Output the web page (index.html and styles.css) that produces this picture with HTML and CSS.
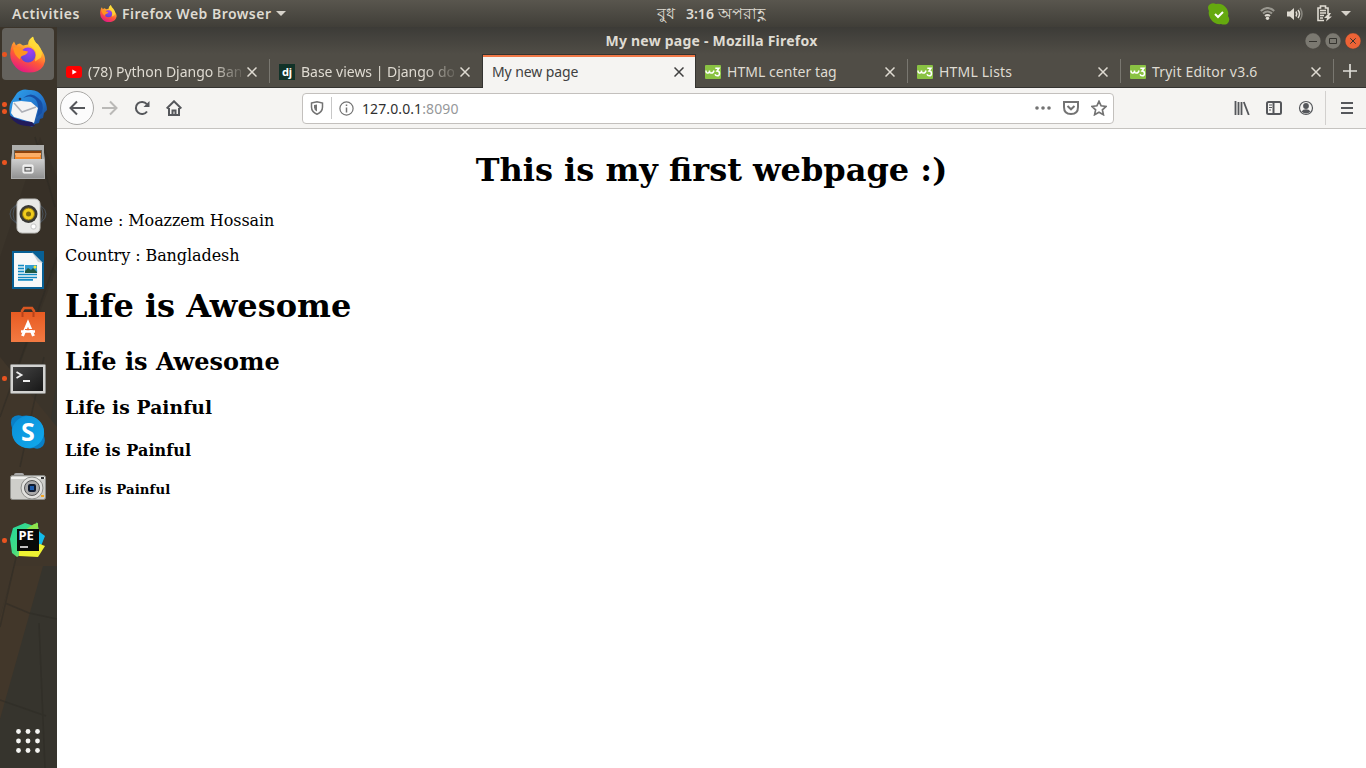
FILE: index.html
```html
<!DOCTYPE html>
<html lang="en">
<head>
<meta charset="utf-8">
<title>My new page - Mozilla Firefox</title>
<link rel="stylesheet" href="styles.css">
</head>
<body>
<svg class="defs" width="0" height="0" aria-hidden="true">
  <defs>
    <linearGradient id="fire" x1=".8" y1="0" x2=".35" y2="1"><stop offset="0" stop-color="#fff44f"/><stop offset=".35" stop-color="#ffb02e"/><stop offset=".62" stop-color="#ff5a36"/><stop offset="1" stop-color="#e31587"/></linearGradient>
    <radialGradient id="globe" cx=".6" cy=".2" r=".9"><stop offset="0" stop-color="#a83cf5"/><stop offset="1" stop-color="#5348d0"/></radialGradient>
    <linearGradient id="bird" x1="0" y1="0" x2="1" y2="1"><stop offset="0" stop-color="#2fa4ee"/><stop offset=".6" stop-color="#2273cb"/><stop offset="1" stop-color="#173779"/></linearGradient>
    <linearGradient id="metal" x1="0" y1="0" x2="0" y2="1"><stop offset="0" stop-color="#cfcfcf"/><stop offset="1" stop-color="#929292"/></linearGradient>
    <linearGradient id="bag" x1="0" y1="0" x2="0" y2="1"><stop offset="0" stop-color="#e85b22"/><stop offset="1" stop-color="#f27a42"/></linearGradient>
    <linearGradient id="term" x1="0" y1="0" x2="1" y2="1"><stop offset="0" stop-color="#454545"/><stop offset="1" stop-color="#171717"/></linearGradient>
    <linearGradient id="sky" x1="0" y1="0" x2="1" y2="1"><stop offset="0" stop-color="#0a8fd8"/><stop offset="1" stop-color="#11a9ed"/></linearGradient>
    <linearGradient id="pyg" x1="0" y1="0" x2="1" y2="1"><stop offset="0" stop-color="#20d6a0"/><stop offset=".5" stop-color="#43db82"/><stop offset="1" stop-color="#f5f32e"/></linearGradient>
  </defs>
  <symbol id="firefox" viewBox="0 0 36 36">
    <path d="M2 8 4 5l2 4q2-2 4-2l3 2 5-1Q18 3 23 0q1 5 5 8l3 5q5 7 4 12-2 9-12 11-10 2-17-5Q-3 22 2 8" fill="url(#fire)"/>
    <path d="M23 0q-5 5-4 9 5 2 7 7l-1 9 6-4q3-6-3-13-4-3-5-8" fill="#ffe038" opacity=".7"/>
    <circle cx="18" cy="18.500" r="7.500" fill="url(#globe)"/>
    <path d="M3 11q7-2 10 3l5 1q-1 3-5 4-3 1-3 4-5-4-6-8z" fill="#ff9420"/>
  </symbol>
  <symbol id="w3" viewBox="0 0 16 14"><rect width="16" height="14" rx="1" fill="#8ac243"/><path d="M1 5.500q0 3 2 2.500 1.500 0 1.500-2.500 0 3 2 2.500 2 0 2.500-2.500M10.300 3.300h3.700l-2 2.700q2.500 0 2.500 2.400 0 2.400-2.300 2.400-1.700 0-2.200-1.500" fill="none" stroke="#fff" stroke-width="1.500"/></symbol>
  <symbol id="close" viewBox="0 0 10 10"><path d="m.5.5 9 9m0-9-9 9" fill="none" stroke="currentColor" stroke-width="1.500"/></symbol>
</svg>

<header class="topbar">
  <span class="activities">Activities</span>
  <span class="appmenu"><svg width="17" height="17"><use href="#firefox"/></svg><span>Firefox Web Browser</span><i class="caret"></i></span>
  <span class="clock"><span class="bn day">বুধ</span><span class="time">3:16</span><span class="bn">অপরাহ্ণ</span></span>
  <span class="tray">
    <svg class="status" width="22" height="22" viewBox="0 0 22 22"><path d="M1 2Q4-1 8 1q7-1 11 5 2 4 1 7 3 4-1 8-3 1-6 0-7 1-11-6Q0 11 1 8-1 4 1 2" fill="#65a90f"/><path d="m7 11 3 3 5-5" fill="none" stroke="#fff" stroke-width="2"/></svg>
    <svg class="wifi" width="15" height="13" viewBox="0 0 15 13" fill="none" stroke-width="2"><path d="M.8 4q6.700-6 13.400 0M3 6.500q4.500-4 9 0" stroke="#99978f"/><path d="M5 9q2.500-2 5 0" stroke="#dfdbd2"/><circle cx="7.500" cy="11.200" r="1.700" fill="#dfdbd2"/></svg>
    <svg class="volume" width="16" height="14" viewBox="0 0 16 14"><path d="M0 4.500h3L7 1v12L3 9.500H0z" fill="#dfdbd2"/><path d="M9 4.500q1.500 2.500 0 5M11 3q3 4 0 8" fill="none" stroke="#dfdbd2" stroke-width="1.500"/><path d="M13 1q4 6 0 12" fill="none" stroke="#88867e" stroke-width="1.500"/></svg>
    <svg class="battery" width="15" height="17" viewBox="0 0 15 17"><path d="M11 9V3H8.500V1h-5v2H1v12.500h6" fill="none" stroke="#dfdbd2" stroke-width="1.600"/><path d="M3 5.500h6M3 8h6M3 10.500h4M3 13h3" stroke="#dfdbd2" stroke-width="1.400"/><path d="m12 8-5 5h3l-1 3.500 6-5h-3l2-3.500z" fill="#dfdbd2"/></svg>
    <i class="caret"></i>
  </span>
</header>

<div class="desktop">
  <nav class="dock">
    <svg class="wallpaper" width="57" height="741" viewBox="0 0 57 741" preserveAspectRatio="none"><rect width="57" height="741" fill="#36342d"/><path d="M0 0h57v350L30 540H0z" fill="#3b342a"/><path d="M0 230 40 110l17 40v90L0 390z" fill="#373027"/><path d="M14 539h29L0 692V590z" fill="#42372a"/><path d="M0 330 57 400v139H14L0 590z" fill="#40362a"/><path d="m20 440 24-110M0 390l57-160M35 110l20 70M0 600l18-78M5 576l24 10 28 6M39 596l6 145M0 673l46 16" fill="none" stroke="#2b2923" stroke-width="1.500" opacity=".5"/></svg>
    <a class="app active"><i class="dot"></i><svg width="36" height="37" viewBox="0 0 36 36"><use href="#firefox"/></svg></a>
    <a class="app"><i class="dot two"></i><svg width="38" height="38" viewBox="0 0 38 38"><path d="M8 4q5-5 12-3 9-1 14 7 4 7 4 13l-3 3-1 5-3 1-1 4-4 1-3 3L2 29q-4-12 2-19z" fill="url(#bird)"/><path d="M14 9q8-4 13 2 4 6 1 17l5-4q3-10-4-15Q22 2 14 9" fill="#164fa5"/><path d="m4 13 8-1 10 1 7 6-4 15-20-6-3-4z" fill="#f4f4f4"/><path d="m5 14 8 9 14-5" fill="none" stroke="#aeb0b7" stroke-width="1.500"/><path d="M0 26q10 6 23 7l3 4Q7 39 0 26" fill="#211b5b"/><circle cx="11" cy="10" r="1.300" fill="#2b2b45"/></svg></a>
    <a class="app"><i class="dot"></i><svg width="34" height="36" viewBox="0 0 34 36"><path d="M2 1h30l2 15v19H0V16z" fill="#aaa"/><path d="M1 1h32v15H1z" fill="#aeaeac"/><path d="M3 6h28v10H3z" fill="#666158"/><path d="M4 7h26v2H4z" fill="#8d420c"/><path d="M4 9h26v6H4z" fill="#f68a2c"/><path d="M4 10h26M5 12h24" stroke="#ffd2a5"/><path d="M1 15h32v19H1z" fill="url(#metal)"/><rect x="12" y="21" width="10" height="8" rx="1" fill="#ddd" stroke="#fff"/><rect x="14" y="23.500" width="6" height="3.500" fill="#ddd" stroke="#555"/></svg></a>
    <a class="app"><svg width="38" height="36" viewBox="0 0 38 36"><g fill="none" stroke="#5d7692" opacity=".5"><ellipse cx="19" cy="16" rx="18" ry="12"/><ellipse cx="19" cy="16" rx="15" ry="14"/></g><rect x="8" y="1" width="23" height="34" rx="5" fill="#e9e9e7" stroke="#bfbfbd"/><circle cx="19.500" cy="16" r="9" fill="#3a3935"/><circle cx="19.500" cy="16" r="6" fill="#f1cc1c" stroke="#8c7412"/><circle cx="19.500" cy="16" r="2.500" fill="#7d6910"/><rect x="22" y="26" width="5" height="5" rx="2" fill="#fff" stroke="#c6c6c6"/></svg></a>
    <a class="app"><svg width="32" height="38" viewBox="0 0 32 38"><path d="M1 1h20l10 10v26H1z" fill="#f8f8f8" stroke="#086095" stroke-width="2"/><path d="M20 0h12v12z" fill="#086095"/><path d="m20 1 11 11-5-1z" fill="#cbd1d5"/><path d="M6 14h6v5h14v3H6z" fill="#d7ecf6"/><path d="M6 14.500h6M6 17.500h6M6 20.500h6M6 23.500h19M6 26.500h19M6 28.800h15" stroke="#138ac3" stroke-width="1.700"/><path d="M13 14h12v8H13z" fill="#329cd0"/><path d="m13 20 3-3 3 2 2-2 4 4v1H13z" fill="#205944"/><circle cx="23" cy="16" r="1.500" fill="#f5e52d"/></svg></a>
    <a class="app"><svg width="34" height="37" viewBox="0 0 34 37"><path d="M11 12V5l2-3h8l2 3v7" fill="none" stroke="#d95722" stroke-width="2.500"/><path d="M0 6h34v30H0z" fill="url(#bag)"/><path d="M11.500 11V6M22.500 11V6" stroke="#b8431a" stroke-width="2"/><path d="m11.500 30 5.500-13 5.500 13" fill="none" stroke="#fff" stroke-width="3"/><path d="M10 25.500h14" stroke="#fff" stroke-width="2.500"/><path d="M14 23.500h9" stroke="#ed6932"/></svg></a>
    <a class="app"><i class="dot"></i><svg class="terminal" width="36" height="30" viewBox="0 0 36 30"><rect x=".5" y=".5" width="35" height="29" rx="1" fill="#d3d3d1" stroke="#8b8b88"/><rect x="3" y="3" width="30" height="24" fill="url(#term)"/><path d="m6.500 8 5 3-5 3M13 17h7" fill="none" stroke="#eee" stroke-width="1.800"/></svg></a>
    <a class="app"><svg class="skype" width="34" height="34" viewBox="0 0 34 34"><path d="M1 3Q5-1 11 1q11-2 18 6 5 6 4 14 2 6-1 10-4 4-9 2-11 2-18-6-5-7-4-14Q-1 7 1 3" fill="#0a7fc6"/><circle cx="17" cy="17" r="16" fill="url(#sky)"/><text x="17" y="26" text-anchor="middle">S</text></svg></a>
    <a class="app"><svg width="36" height="27" viewBox="0 0 36 27"><rect x="4" y="0" width="10" height="6" rx="2" fill="#aaa"/><rect x=".5" y="2.500" width="35" height="24" rx="2" fill="#cececa" stroke="#8d8d89"/><path d="M1 5h34" stroke="#f0f0ed" stroke-width="2"/><circle cx="22" cy="15" r="11" fill="#e2e2df" stroke="#8f908c"/><circle cx="22" cy="15" r="7.500" fill="#aaa" stroke="#555"/><rect x="18" y="11" width="8" height="8" rx="2" fill="#101b2f"/><rect x="20" y="13" width="4" height="4" fill="#1d5cac"/><path d="M31 4h3v2h-3z" fill="#333"/><path d="M31 22h3v2h-3z" fill="#f4a623"/></svg></a>
    <a class="app"><i class="dot"></i><svg class="pycharm" width="36" height="36" viewBox="0 0 36 36"><path d="m3 6 12-5 9 3 3-4 3 12-10 15-13 8-5-4-2-14z" fill="url(#pyg)"/><path d="M27 8l8 6-4 10-6-3z" fill="#12bceb"/><path d="m30 22 5 2-7 11-19-1V29z" fill="#eff332"/><path d="M24 2 15 8h13V1z" fill="#8de44d"/><rect x="7" y="7" width="22" height="22" fill="#080a09"/><text x="8.500" y="18">PE</text><path d="M10 25h8" stroke="#fff" stroke-width="1.500"/></svg></a>
    <a class="all-apps"><svg width="24" height="24" viewBox="0 0 24 24" fill="#f5f5f2"><circle cx="2.500" cy="2.500" r="2.400"/><circle cx="12" cy="2.500" r="2.400"/><circle cx="21.500" cy="2.500" r="2.400"/><circle cx="2.500" cy="12" r="2.400"/><circle cx="12" cy="12" r="2.400"/><circle cx="21.500" cy="12" r="2.400"/><circle cx="2.500" cy="21.500" r="2.400"/><circle cx="12" cy="21.500" r="2.400"/><circle cx="21.500" cy="21.500" r="2.400"/></svg></a>
  </nav>

  <section class="window">
    <div class="titlebar"><strong>My new page - Mozilla Firefox</strong>
      <span class="controls"><svg width="16" height="16" viewBox="0 0 16 16"><circle cx="8" cy="8" r="7.900"/><path d="M4 8.500h8"/></svg><svg width="16" height="16" viewBox="0 0 16 16"><circle cx="8" cy="8" r="7.900"/><path d="M4.500 5.500h7v5h-7z"/></svg><svg class="quit" width="16" height="16" viewBox="0 0 16 16"><circle cx="8" cy="8" r="7.900"/><path d="m5.300 5.300 5.400 5.400m0-5.400-5.400 5.400"/></svg></span>
    </div>
    <div class="tabs">
      <div class="tab"><svg class="fav" width="16" height="12" viewBox="0 0 16 12"><rect width="16" height="12" rx="3" fill="#f00"/><path d="m6.300 3.500 4.500 2.500-4.500 2.500z" fill="#fff"/></svg><span class="label fade">(78) Python Django Ban</span><svg class="x"><use href="#close"/></svg></div>
      <div class="tab last"><svg class="fav dj" width="16" height="16" viewBox="0 0 16 16"><rect width="16" height="16" fill="#113228"/><text x="8" y="12" text-anchor="middle">dj</text></svg><span class="label fade">Base views | Django do</span><svg class="x"><use href="#close"/></svg></div>
      <div class="tab selected"><span class="label">My new page</span><svg class="x"><use href="#close"/></svg></div>
      <div class="tab after"><svg class="fav" width="16" height="14"><use href="#w3"/></svg><span class="label">HTML center tag</span><svg class="x"><use href="#close"/></svg></div>
      <div class="tab"><svg class="fav" width="16" height="14"><use href="#w3"/></svg><span class="label wide">HTML Lists</span><svg class="x"><use href="#close"/></svg></div>
      <div class="tab"><svg class="fav" width="16" height="14"><use href="#w3"/></svg><span class="label wide">Tryit Editor v3.6</span><svg class="x"><use href="#close"/></svg></div>
      <div class="new-tab"><svg width="14" height="14" viewBox="0 0 14 14"><path d="M7 0v14M0 7h14" stroke="#deddd8" stroke-width="1.700"/></svg></div>
    </div>
    <div class="toolbar">
      <span class="back"><svg width="16" height="16" viewBox="0 0 16 16"><path d="M16 8H1.500M8 1.500 1.500 8 8 14.500"/></svg></span>
      <span class="tool forward"><svg width="16" height="16" viewBox="0 0 16 16"><path d="M0 8h14.500M8 1.500 14.500 8 8 14.500"/></svg></span>
      <span class="tool"><svg width="16" height="16" viewBox="0 0 16 16"><path d="M13 11.500A6.100 6.100 0 1 1 12.800 4.200"/><path d="M15.500 1v6H9.500z" fill="#55575b" stroke="none"/></svg></span>
      <span class="tool"><svg width="16" height="16" viewBox="0 0 16 16"><path d="m.7 8.500 7.300-7.200 7.300 7.200M3 8v7h10V8"/><path d="M6.500 15v-4.500h3V15"/></svg></span>
      <div class="urlbar">
        <svg class="shield" width="14" height="14" viewBox="0 0 14 14"><path d="M1.500 2 7 .8 12.500 2v4q0 5-5.500 7.200Q1.500 11 1.500 6z"/><path d="M7 3.500 4 4v2.500q0 2.500 3 4z" fill="#737373" stroke="none"/></svg>
        <i class="split"></i>
        <svg class="info" width="15" height="15" viewBox="0 0 15 15"><circle cx="7.500" cy="7.500" r="6.600" stroke-width="1.200"/><path d="M7.500 6.500v5M7.500 3.500v1.600"/></svg>
        <span class="url">127.0.0.1<em>:8090</em></span>
        <svg class="dots" width="16" height="4" viewBox="0 0 16 4"><circle cx="2" cy="2" r="1.800"/><circle cx="8" cy="2" r="1.800"/><circle cx="14" cy="2" r="1.800"/></svg>
        <svg width="16" height="14" viewBox="0 0 16 14"><path d="M1 1h14v5q0 7-7 7t-7-7z"/><path d="M4.500 5 8 8.300 11.500 5"/></svg>
        <svg width="16" height="16" viewBox="0 0 16 16"><path d="m8 1.300 2.100 4.500 5 .6-3.700 3.400 1 4.900L8 12.200l-4.400 2.500 1-4.900L.9 6.400l5-.6z" stroke-width="1.700"/></svg>
      </div>
      <div class="right-tools">
        <svg width="16" height="14" viewBox="0 0 16 14"><path d="M1.500 0v14M4.500 1v13M7.500 1v13M9.800 1l5 13" stroke-width="1.800"/></svg>
        <svg width="16" height="14" viewBox="0 0 16 14"><rect x="1" y="1" width="14" height="12" rx="1.500"/><path d="M7.500 1v12"/><path d="M3 4h3M3 6.500h3M3 9h2" stroke-width="1"/></svg>
        <svg width="16" height="16" viewBox="0 0 16 16"><circle cx="8" cy="8" r="6.500" stroke-width="1.200"/><circle cx="8" cy="6" r="2.900" fill="#55575b" stroke="none"/><path d="M3.500 11.500Q5 9.300 8 9.300t4.500 2.200Q10.500 13.500 8 13.500t-4.500-2z" fill="#55575b" stroke="none"/></svg>
        <i class="divider"></i>
        <svg class="menu" width="12" height="12" viewBox="0 0 12 12"><path d="M0 1h12M0 6h12M0 11h12"/></svg>
      </div>
    </div>
    <main class="page">
      <h1 class="title">This is my first webpage :)</h1>
      <p>Name : Moazzem Hossain</p>
      <p>Country : Bangladesh</p>
      <h1>Life is Awesome</h1>
      <h2>Life is Awesome</h2>
      <h3>Life is Painful</h3>
      <h4>Life is Painful</h4>
      <h5>Life is Painful</h5>
    </main>
  </section>
</div>
</body>
</html>
```
FILE: styles.css
```css
* { box-sizing: border-box; }
body { margin: 0; width: 1366px; height: 768px; overflow: hidden; background: #fff; font: 14px/20px "Noto Sans", sans-serif; display: flex; flex-direction: column; }
svg { flex: none; display: block; }
.defs { position: absolute; }
.topbar { height: 27px; flex: none; display: grid; grid-template-columns: 100px 557px 1fr auto; align-items: center; padding-right: 15px; background: linear-gradient(#59564e, #403e38); color: #dfdbd2; font-weight: 600; font-size: 14px; }
.activities { padding-left: 12px; letter-spacing: .55px; }
.appmenu { display: flex; align-items: center; gap: 5px; letter-spacing: .48px; }
.caret { border: 5px solid transparent; border-top-color: #d6d2ca; border-bottom: 0; width: 0; flex: none; }
.clock { display: flex; align-items: center; white-space: nowrap; }
.time { margin-right: 4px; }
.day { width: 29px; }
.bn { font-weight: 500; font-size: 15.500px; margin-top: -2px; }
.tray { display: flex; align-items: center; }
.wifi { margin-left: 30px; }
.volume { margin-left: 12px; }
.battery { margin-left: 14px; }
.tray .caret { margin-left: 9px; }
.desktop { display: flex; flex: 1; min-height: 0; }
.dock { width: 57px; flex: none; position: relative; display: flex; flex-direction: column; }
.wallpaper { position: absolute; inset: 0; z-index: -1; }
.app { height: 54px; position: relative; display: flex; align-items: center; justify-content: center; padding-right: 1px; flex: none; }
.app.active::before { content: ""; position: absolute; z-index: -1; left: 2px; top: 1px; width: 52px; height: 52px; border-radius: 4px; background: #64625d; }
.dot { position: absolute; left: 2px; top: 25px; width: 4.500px; height: 4.500px; border-radius: 50%; background: #e95420; }
.dot.two { top: 21px; box-shadow: 0 7px #e95420; }
.terminal { margin-top: 2px; }
.skype text { font: 700 25px "Open Sans", sans-serif; fill: #fff; }
.pycharm text { font: 700 13px "Noto Sans", sans-serif; fill: #fff; }
.all-apps { margin: auto 0 15px 16px; }
.window { flex: 1; min-width: 0; display: flex; flex-direction: column; }
.titlebar { height: 27px; flex: none; display: grid; grid-template-columns: 76px 1fr 76px; align-items: center; background: linear-gradient(#3c3b37, #504d46); color: #dfdbd2; }
.titlebar strong { grid-column: 2; text-align: center; font-size: 14px; font-weight: 700; letter-spacing: .23px; }
.controls { display: flex; gap: 4px; justify-content: flex-end; padding-right: 5px; }
.controls circle { fill: #7b7971; stroke: #393833; stroke-width: .3; }
.controls path { fill: none; stroke: #35342f; }
.controls .quit circle { fill: #ed6336; }
.tabs { height: 34px; flex: none; display: grid; grid-template-columns: 213px 212px 214px 212px 213px 213px 1fr; background: #504d46; color: #dfdbd2; }
.tab { display: flex; align-items: center; min-width: 0; padding: 2px 13px 0 9px; border-bottom: 1px solid #343330; background: linear-gradient(#797770, #797770) right 5px / 1px 24px no-repeat; }
.tab.last { background-image: none; padding-right: 12px; }
.tab.selected { padding: 0 11px 0 9px; background: #f5f4f2; color: #404040; border: 1px solid #343330; border-bottom: 0; box-shadow: inset 0 2px #f07746; }
.fav { margin-right: 6px; }
.dj text { font: 700 11px "Noto Sans", sans-serif; fill: #fff; }
.label { flex: 1; min-width: 0; white-space: nowrap; font-size: 14px; letter-spacing: .05px; }
.selected .label { letter-spacing: -.1px; }
.wide { letter-spacing: .2px; }
.fade { letter-spacing: -.02px; mask-image: linear-gradient(90deg, #000 80%, transparent 104%); }
.x { width: 10px; height: 10px; margin-left: 6px; color: inherit; }
.new-tab { display: flex; align-items: center; padding: 0 0 0 9px; border-bottom: 1px solid #343330; }
.toolbar { height: 41px; flex: none; display: flex; align-items: center; padding-left: 3px; background: #f5f4f2; border-bottom: 1px solid #c5c3c0; }
.toolbar svg { fill: none; stroke: #55575b; stroke-width: 2; }
.back { width: 34px; height: 34px; border: 1px solid #a9a8a6; border-radius: 50%; background: #fcfcfc; display: grid; place-items: center; }
.tool { width: 32px; display: grid; place-items: center; }
.toolbar .forward svg { stroke: #bab9b7; }
.urlbar { width: 812px; height: 31px; margin-left: 112px; border: 1px solid #c3c0bd; border-radius: 4px; background: #fff; display: flex; align-items: center; gap: 12px; padding: 0 6px 0 7px; }
.toolbar .urlbar svg { stroke: #737373; }
.toolbar .urlbar svg.shield, .toolbar .urlbar svg.info { stroke-width: 1.500; }
.split { width: 1px; height: 22px; margin: 0 -5px 0 -5px; background: #c7c7c7; }
.url { flex: 1; color: #303030; font-size: 14px; margin-left: -4px; padding-top: 1px; letter-spacing: .1px; }
.url em { font-style: normal; color: #96989a; }
.toolbar .urlbar svg.dots { fill: #737373; stroke: none; }
.right-tools { flex: 1; display: flex; align-items: center; gap: 16px; justify-content: flex-end; padding-right: 13px; }
.divider { width: 1px; height: 34px; background: #d2d0ce; margin: 0 -1px 0 -5px; }
.page { flex: 1; padding: .5px 8px 0; background: #fff; color: #000; font: 16px/normal "DejaVu Serif", serif; overflow: hidden; }
.page h1 { line-height: 38px; }
.page p { letter-spacing: -.07px; }
.page h2 { margin-top: 22.500px; }
.page h3 { line-height: 22px; letter-spacing: .08px; }
.page h4 { line-height: 20px; margin: 23px 0 20px; letter-spacing: .08px; }
.page h5 { line-height: 17px; margin-top: 20px; letter-spacing: .12px; }
.page .title { text-align: center; margin-bottom: 22.500px; }
```
